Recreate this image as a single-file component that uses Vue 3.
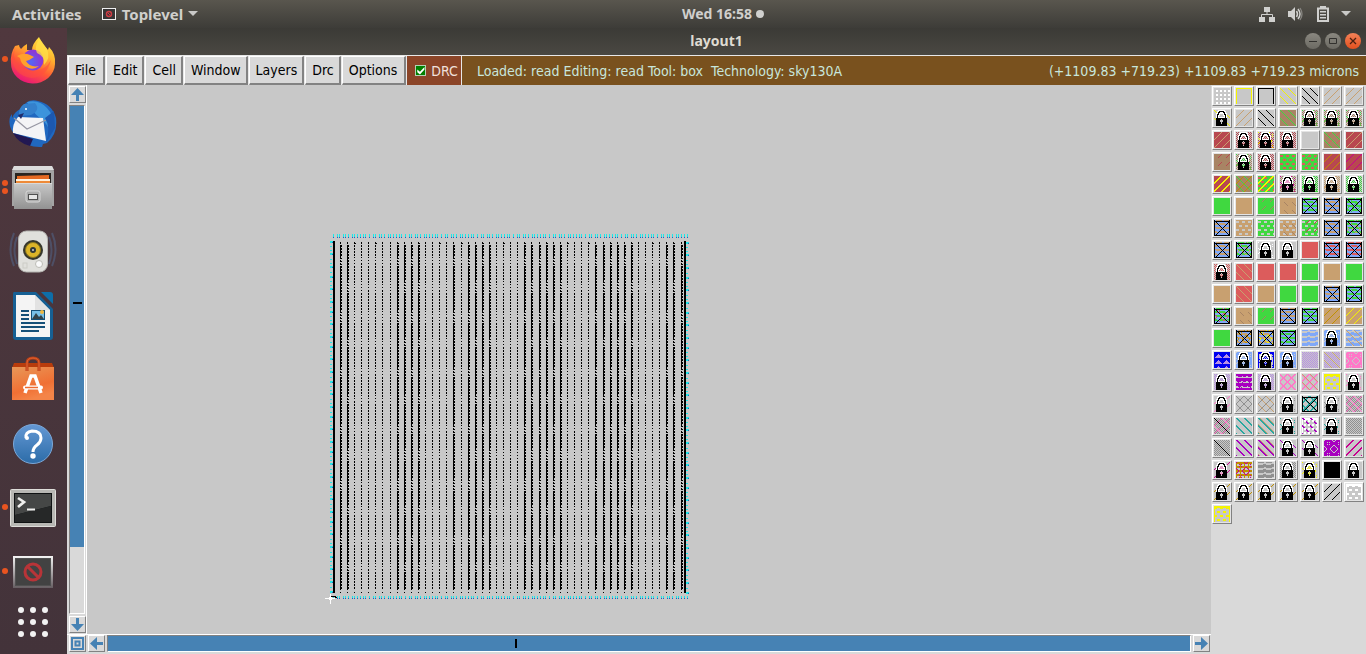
<script setup>
import { ref } from 'vue'

const menus = ['File', 'Edit', 'Cell', 'Window', 'Layers', 'Drc', 'Options']
const drc = ref(true)

const K = {
  g: '#c8c8c8', w: '#ffffff', k: '#000000', y: '#f4f400', G: '#40d840', T: '#c8a070',
  R: '#dc5c5c', D: '#b84850', B: '#a88464', b: '#80a8f8', o: '#c09000', m: '#c80090',
  v: '#a800c0', l: '#b890e4', p: '#ff78c8', c: '#28a8a0', a: '#909090', n: '#0000f0'
}

const hash = (x, y) => (x * 7 + y * 13 + x * y * 5) % 11

const shapes = {
  '\\': (x, y) => (x - y + 16) % 8 === 0,
  '/': (x, y) => (x + y) % 8 === 7,
  '2': (x, y) => (x - y + 16) % 8 < 2,
  '3': (x, y) => (x - y + 16) % 8 === 2,
  '4': (x, y) => (x + y) % 8 > 5,
  M: (x, y) => x === y,
  d: (x, y) => x % 4 > 1 && y % 4 > 1,
  S: (x, y) => y % 4 > 0 && y % 4 < 3 && (x + ((y >> 2) & 1) * 3) % 6 < 3,
  D: (x, y) => x % 4 !== 0 && y % 4 > 1,
  f: (x, y) => x === 0 || y === 0 || x === 15,
  e: (x, y) => x < 1 || y < 2 || x > 14,
  k: (x, y) => (x + y) % 2 === 0,
  K: (x, y) => (x + y) % 2 === 0 && (x < 3 || x > 12 || y < 3),
  s: (x, y) => (x + y) % 8 === 7 && y % 8 < 4,
  b: (x, y) => (x - y + 16) % 8 === 0 && y % 8 > 3,
  c: (x, y) => (x - y + 16) % 8 === 0 || (x + y) % 8 === 7,
  C: (x, y) => (x - y + 17) % 8 < 2 || (x + y) % 8 > 5,
  w: (x, y) => y % 5 === 1 || (y % 5 === 2 && x % 8 < 5) || (y % 5 === 0 && x % 8 > 5),
  h: (x, y) => (y % 4 === 3 && (x + y) % 8 < 6) || (y % 4 === 0 && (x + y) % 8 > 1),
  r: (x, y) => hash(x, y) < 2,
  t: (x, y) => Math.abs((x % 8) - 4) < (y % 6) - 1,
  u: (x, y) => y % 5 === 3 || (y % 5 === 2 && x % 5 < 2),
  X: (x, y) => x === 0 || y === 1 || x === 15 || y === 15 || x === y || x + y === 16
}

const lockRows = [
  '    wwwwwww     ',
  '   wwkkkkkww    ',
  '   wkkwwwkkw    ',
  '  wwkwwwwwkww   ',
  '  wkkw...wkkw   ',
  '  wkww...wwkw   ',
  '  wkw.....wkw   ',
  '  wkwwwwwwwkw   ',
  '  kkkkkkkkkkk   ',
  '  kkkkk.kkkkk   ',
  '  kkkk...kkkk   ',
  '  kkkk...kkkk   ',
  '  kkkkk.kkkkk   ',
  '  kkkkk.kkkkk   ',
  '  kkkkkkkkkkk   ',
  '  kkkkkkkkkkk   '
]

function paint(code) {
  const layers = code.slice(1).match(/../g) || []
  const paths = {}
  for (let y = 0; y < 16; y++) {
    let start = 0
    let last = null
    for (let x = 0; x <= 16; x++) {
      let c = null
      if (x < 16) {
        c = code[0]
        for (const [kind, colour] of layers) {
          if (kind === 'L') {
            const q = lockRows[y][x] || ' '
            if (q === 'w' || q === 'k') c = q
            else if (q === '.') c = (x + y) % 2 ? colour : 'g'
          } else if (shapes[kind](x, y)) c = colour
        }
      }
      if (c !== last) {
        if (last && last !== code[0]) {
          paths[last] = (paths[last] || '') + `M${start} ${y}h${x - start}v1h-${x - start}z`
        }
        start = x
        last = c
      }
    }
  }
  return { bg: K[code[0]], parts: Object.entries(paths).map(([c, d]) => ({ fill: K[c], d })) }
}

const xg = 'bhGXk'
const xt = 'bhTXk'
const xr = 'bhRXk'
const rows = [
  ['gdw', 'gfy', 'gfk', 'g\\y', 'g\\k', 'g/T', 'g/T'],
  ['g\\yLg', 'g/T', 'g\\k', 'B\\G', 'gKBrGLB', 'gKBrGLB', 'gKBrGLB'],
  ['D/T', 'gKDLD', 'gKDryLD', 'gKDLD', 'g', 'B\\GsR', 'D/T'],
  ['BsD', 'gKBrGLG', 'gKDLD', 'GSR', 'GSRsB', 'D/o', 'D/m'],
  ['D4y', 'B\\G/o', 'GSR4y', 'gKBrmLp', 'grGKGLG', 'grTKTLT', 'gKGLG'],
  ['G', 'T', 'GsB', 'TbB', xg, xt, 'bhGrGXk'],
  [xt, 'TSg', 'GSg', 'TSgbB', 'GSgsD', xt, 'bhGrTXk'],
  [xt, 'bhGrTXk', 'grwLg', 'gLg', 'R', xr, xr],
  ['gKRLR', 'R\\T', 'R', 'R', 'G', 'T', 'G'],
  ['T', 'R\\T', 'T', 'G', 'G', xt, xg],
  ['bhGrRXk', 'TbB', 'GsB', xt, xg, 'T/o', 'T/y'],
  ['G', 'bhTroXk', 'bhTryXk', 'bhGXk', 'bwg', 'brgLb', 'bwg\\T'],
  ['ntl', 'brgLb', 'grnenLn', 'brgLb', 'gkl', 'gkl\\T', 'prg'],
  ['gklLl', 'vugrv', 'gklLl', 'gCp', 'gCp\\T', 'gSyey', 'grpLg'],
  ['g/pLg', 'gca', 'gca\\T', 'graLg', 'gCcXk', 'graLg', 'gkacp'],
  ['gkacpMk', 'g2c', 'g2c3T', 'grcLg', 'gew2vdw', 'grcLg', 'gka'],
  ['gkaMk', 'g2v', 'g2v3T', 'g\\vLg', 'g\\vLg', 'vrgrg', 'g4m'],
  ['g/mLp', 'oDgrm', 'awg', 'gKaLg', 'gryLy', 'k', 'gLg'],
  ['g/oLg', 'g/oLg', 'g/oLg', 'g/oLg', 'g/oLg', 'g/k', 'gSwew'],
  ['gSyey']
]
const swatches = rows.flat().map((code, i) => ({ id: i, ...paint(code) }))

/* Memory array drawing, 380 x 380 local units */
const rect = (x, y, w, h) => `M${x} ${y}h${w}v${h}h-${w}z`
const heavy = new Set([1, 2, 9, 10, 11, 12, 17, 19, 20, 21, 22, 27, 28, 29, 30, 31, 32, 37, 38, 39, 40, 41, 42, 47, 48, 49])
let bars = rect(13, 13, 2, 352) + rect(364, 13, 2, 352) + rect(11, 368, 5, 1) + rect(15, 369, 2, 1)
for (let i = 1; i < 50; i++) {
  const x = Math.floor(13.2 + i * 7.1)
  const phase = i % 2 ? 27 : 53
  bars += rect(x, 14, 1, 2) + (i % 3 ? '' : rect(x + 1, 15, 1, 1)) + rect(x, 364, 1, 1)
  for (let y = 17; y < 362; y += 3) {
    const gap = (y - phase + 56) % 56 < 10
    if (heavy.has(i)) {
      bars += gap ? rect(x, y, 1, 1) + rect(x, y + 1, 2, 1) : rect(x, y, 1, 3) + rect(x + 1, y, 1, 2)
    } else {
      bars += rect(x, y, 1, gap || (y + i * 28) % 28 < 5 ? 1 : 2)
    }
  }
}
let cyan = ''
let blue = ''
for (let base = 13; base < 368; base += 36) {
  for (const o of [0, 4, 6, 10, 12, 15, 19, 21, 24, 27, 30, 32]) {
    const x = base + o
    if (x > 367) continue
    cyan += rect(x, 6, 1, 3) + rect(x, 368, 1, 2)
    blue += rect(x, 9, 1, 1) + rect(x, 370, 1, 1)
  }
}
for (let base = 13; base < 366; base += 35) {
  for (const [o, big] of [[0, 1], [5, 0], [9, 0], [12, 1], [18, 0], [22, 0], [25, 1], [31, 0]]) {
    const y = base + o
    if (y > 365) continue
    cyan += rect(10, y, big ? 3 : 2, big ? 2 : 1) + rect(366, y + 1, big ? 3 : 2, big ? 2 : 1)
    if (big) blue += rect(12, y + 1, 1, 1) + rect(368, y + 2, 1, 1)
  }
}
</script>

<template>
  <div class="desktop">
    <header class="topbar">
      <div class="top-left">
        <button class="plain">Activities</button>
        <button class="plain app">
          <svg width="14" height="12" viewBox="0 0 14 12"><rect x=".5" y=".5" width="13" height="11" fill="#373536" stroke="#eee" /><circle cx="7" cy="6" r="2.5" fill="none" stroke="#d03c44" stroke-width="1.4" /><path d="M5.5 4.5l3 3" stroke="#d03c44" /></svg>
          Toplevel
          <svg width="10" height="6" viewBox="0 0 10 6"><path d="M0 0h10L5 5z" fill="#c9c9c7" /></svg>
        </button>
      </div>
      <button class="plain clock">Wed 16:58<i class="dot"></i></button>
      <div class="tray">
        <svg width="16" height="16" viewBox="0 0 16 16" fill="#d0d0ce"><path d="M5 1h6v5H5zM0 11h6v5H0zM10 11h6v5h-6z" /><path d="M8 5v4M2.5 11V8.500h11V11" fill="none" stroke="#d0d0ce" /></svg>
        <svg width="16" height="16" viewBox="0 0 16 16"><path d="M1 5h3l4-4v14l-4-4H1z" fill="#d0d0ce" /><path d="M9.500 5q2 3 0 6M11 3q4 5 0 10" fill="none" stroke="#d0d0ce" stroke-width="1.500" /><path d="M13 2q4 6 0 12" fill="none" stroke="#85847f" stroke-width="1.300" /></svg>
        <svg class="battery" width="12" height="16" viewBox="0 0 12 16"><path d="M1 2.500h10v12.500H1z" fill="none" stroke="#d0d0ce" stroke-width="2" /><path d="M3 0h6v2H3zM3 5h6v1.500H3zM3 8h6v1.500H3zM3 11h6v1.500H3z" fill="#d0d0ce" /></svg>
        <svg width="10" height="6" viewBox="0 0 10 6"><path d="M0 0h10L5 5z" fill="#c9c9c7" /></svg>
      </div>
    </header>

    <div class="body">
      <nav class="dock" aria-label="Dock">
        <button class="launcher" aria-label="Firefox">
          <i class="pip"></i>
          <svg width="48" height="48" viewBox="0 0 48 48">
            <defs>
              <linearGradient id="ffa" x1=".8" y1="0" x2=".3" y2="1"><stop offset="0" stop-color="#fff044" /><stop offset=".35" stop-color="#ffb02e" /><stop offset=".65" stop-color="#ff5a36" /><stop offset="1" stop-color="#e8127c" /></linearGradient>
              <radialGradient id="ffb" cx=".4" cy=".6"><stop offset="0" stop-color="#5468f4" /><stop offset="1" stop-color="#8a3ad8" /></radialGradient>
            </defs>
            <path d="M6 10q-5 8-4 17a22 20 0 0 0 44 1q1-10-6-17l-1 3Q32 6 30 1q-7 7-7 13h-5V8q-4 2-6 5-2-2-2-4z" fill="url(#ffa)" />
            <path d="M6 12q-2 7 0 12 6 11 18 11t18-11q-4 17-19 18Q5 40 3 22z" fill="#ff4c40" opacity=".55" />
            <circle cx="24" cy="24" r="10.500" fill="url(#ffb)" />
            <path d="M8 20q7-4 13-1l4 2q-4 3-8 4 4 7 13 5-6 5-13 1-5-3-6-9z" fill="#ffa02c" />
            <path d="M28 17q8 3 7 12 7-7 3-16L31 3q-5 5-4 11z" fill="#ffe04a" opacity=".75" />
          </svg>
        </button>
        <button class="launcher" aria-label="Thunderbird">
          <svg width="48" height="48" viewBox="0 0 48 48">
            <path d="M12 9Q18-2 29 1q14 3 18 17 2 16-9 25l-4 1-1 3q-14 1-24-9Q-2 28 1 17l2-3v4q3-7 9-9z" fill="#2068c0" />
            <path d="M18 2q12-3 20 6 10 11 4 26-3-10-10-15-10-8-14-17z" fill="#3c94dc" />
            <path d="M9 17l25 1 3 23L4 33q-1-9 5-16z" fill="#f4f4f6" /><path d="M5 18l13 11 19-9" fill="none" stroke="#9898a4" stroke-width="1.200" />
            <path d="M4 33l20 6-3 7q-12-3-17-13z" fill="#221852" /><path d="M15 4q-6 4-5 12l12-1q10-5 4-12z" fill="#3480cc" /><path d="M9 15l6-2-3 6z" fill="#202c6c" /><circle cx="17" cy="9" r="1" fill="#fff" />
            <path d="M36 18q6 9 1 25l9-15-1-17z" fill="#1c58b0" />
          </svg>
        </button>
        <button class="launcher" aria-label="Files">
          <i class="pip"></i><i class="pip"></i>
          <svg width="48" height="48" viewBox="0 0 48 48">
            <defs><linearGradient id="fil" x2="0" y2="1"><stop offset="0" stop-color="#c8c8c8" /><stop offset="1" stop-color="#929292" /></linearGradient></defs>
            <path d="M5 2h38l2 5v35H3V7z" fill="#a4a4a4" /><path d="M5 2h38l2 4H3z" fill="#dcdcdc" /><path d="M6 9h36v12H6z" fill="#292420" /><path d="M8 12l32-1v4H8z" fill="#e66a22" /><path d="M7 15h34v5H7z" fill="#fff0dc" /><path d="M7 17h34v2H7z" fill="#ee8a38" /><path d="M5 19h38v26H5z" fill="url(#fil)" /><path d="M5 19h38v1H5z" fill="#dadada" /><rect x="17" y="27" width="14" height="11" rx="2" fill="#adadad" stroke="#d8d8d8" /><rect x="19.500" y="30.500" width="9" height="5" fill="#e6e6e6" stroke="#505050" />
          </svg>
        </button>
        <button class="launcher" aria-label="Rhythmbox">
          <svg width="48" height="48" viewBox="0 0 48 48">
            <path d="M5 5q-7 16 0 33M43 5q7 16 0 33M8 9q-5 12 0 27M40 9q5 12 0 27" fill="none" stroke="#506082" stroke-width="2" opacity=".6" />
            <rect x="9.500" y="3" width="29" height="41" rx="8" fill="#e0e0dc" stroke="#b4b4b0" /><circle cx="24" cy="22" r="10" fill="#37372c" /><circle cx="24" cy="22" r="7.500" fill="#dcb428" stroke="#8c7820" /><circle cx="24" cy="22" r="3" fill="#303838" /><circle cx="24" cy="22" r="1" fill="#ccc" /><circle cx="30" cy="36" r="3.500" fill="#fafafa" stroke="#bcbcb6" /><rect x="14" y="35" width="4" height="5" fill="none" stroke="#ccccc6" />
          </svg>
        </button>
        <button class="launcher" aria-label="LibreOffice Writer">
          <svg width="48" height="48" viewBox="0 0 48 48">
            <path d="M5 0h22l17 17v28q0 3-3 3H7q-3 0-3-3V2q0-2 1-2z" fill="#166094" /><path d="M32 0h9q3 0 3 3v9z" fill="#0e6ea8" /><path d="M7 3h19l15 15v27H7z" fill="#f4f4f4" /><path d="M26 3v15h15z" fill="#dadada" opacity=".7" />
            <path d="M12 19h8M12 23h8M12 27h8M12 31h24M12 35h24M12 39h18" stroke="#155078" stroke-width="2" /><rect x="22" y="18" width="14" height="10" fill="#155078" /><path d="M23 19h12v8H23z" fill="#78c0e8" /><path d="M23 27l4-6 3 4 2-2 3 4z" fill="#34434a" /><circle cx="33" cy="20" r="2" fill="#f0b840" />
          </svg>
        </button>
        <button class="launcher" aria-label="Ubuntu Software">
          <svg width="48" height="48" viewBox="0 0 48 48">
            <defs><linearGradient id="sof" x2=".4" y2="1"><stop offset="0" stop-color="#e89858" /><stop offset=".7" stop-color="#f07034" /><stop offset="1" stop-color="#f48448" /></linearGradient></defs>
            <path d="M5 7h38l2 5v32H3V12z" fill="#b83c0c" /><path d="M3 11h42v33H3z" fill="url(#sof)" /><path d="M18 15V7q0-5 6-5t6 5v8" fill="none" stroke="#b84018" stroke-width="3" /><path d="M18 15V7q0-5 6-5t6 5v8" fill="none" stroke="#e86430" />
            <path d="M16 37l6-17h4l6 17" fill="none" stroke="#fff" stroke-width="3.500" /><path d="M16 31.500h16" stroke="#fff" stroke-width="4" stroke-linecap="round" /><path d="M16 31.500h13" stroke="#ee6c30" stroke-width="1.500" />
          </svg>
        </button>
        <button class="launcher" aria-label="Help">
          <svg width="48" height="48" viewBox="0 0 48 48">
            <defs><linearGradient id="hel" x2="0" y2="1"><stop offset="0" stop-color="#6498d4" /><stop offset="1" stop-color="#2c6ca8" /></linearGradient></defs>
            <circle cx="24" cy="24" r="19.500" fill="url(#hel)" stroke="#7ca8d8" /><path d="M17 18q-1-6 6-7 9 0 9 7 0 4-4 7-4 3-4 7" fill="none" stroke="#fff" stroke-width="3" /><circle cx="18" cy="18" r="2" fill="#fff" /><circle cx="24" cy="36" r="2.700" fill="#fff" />
          </svg>
        </button>
        <button class="launcher" aria-label="Terminal">
          <i class="pip"></i>
          <svg width="48" height="48" viewBox="0 0 48 48">
            <rect x="1.500" y="5.500" width="45" height="37" rx="1" fill="#b8b8b4" stroke="#dededa" /><path d="M5 9h38v30H5z" fill="#0f1213" /><path d="M6 10h36v12L6 31z" fill="#454746" /><path d="M6 31l36-9v16H6z" fill="#262828" /><path d="M9 14l6 4-6 5" fill="none" stroke="#f0f0ee" stroke-width="2.700" /><path d="M18 25.500h8" stroke="#f0f0ee" stroke-width="2" />
          </svg>
        </button>
        <button class="launcher" aria-label="Toplevel">
          <i class="pip"></i>
          <svg width="48" height="48" viewBox="0 0 48 48">
            <defs><linearGradient id="win" x2="0" y2="1"><stop offset="0" stop-color="#f4f4f4" /><stop offset="1" stop-color="#665e62" /></linearGradient></defs>
            <path d="M4 8h40v32H4z" fill="url(#win)" /><path d="M6 10h36v28H6z" fill="#505050" /><path d="M7 11h34v26H7z" fill="#424242" /><circle cx="24" cy="24" r="8" fill="none" stroke="#b83438" stroke-width="3" /><path d="M18 18l12 12" stroke="#b83438" stroke-width="3" />
          </svg>
        </button>
        <button class="apps" aria-label="Show applications">
          <i v-for="n in 9" :key="n"></i>
        </button>
      </nav>

      <main class="window">
        <div class="titlebar">
          <h1>layout1</h1>
          <div class="controls">
            <button aria-label="Minimize"><svg width="16" height="16" viewBox="0 0 16 16"><path d="M4 8.500h8" stroke="#32312e" /></svg></button>
            <button aria-label="Maximize"><svg width="16" height="16" viewBox="0 0 16 16"><path d="M4.500 5.500h7v5h-7z" fill="none" stroke="#32312e" /></svg></button>
            <button class="close" aria-label="Close"><svg width="16" height="16" viewBox="0 0 16 16"><path d="M5 5l6 6M11 5l-6 6" stroke="#4c2010" stroke-width="1.300" /></svg></button>
          </div>
        </div>

        <div class="menubar">
          <button v-for="m in menus" :key="m" class="menu">{{ m }}</button>
          <label class="drc"><input v-model="drc" type="checkbox" />DRC</label>
          <div class="status">
            <span>Loaded: read Editing: read Tool: box&nbsp; Technology: sky130A</span>
            <span>(+1109.83 +719.23) +1109.83 +719.23 microns</span>
          </div>
        </div>

        <div class="work">
          <div class="vscroll">
            <button class="arrow" aria-label="Scroll up"><svg width="15" height="15" viewBox="0 0 15 15"><path d="M7.500 1L14 8H9v6H6V8H1z" fill="#4682b4" /></svg></button>
            <div class="trough"><div class="thumb"><i></i></div></div>
            <button class="arrow" aria-label="Scroll down"><svg width="15" height="15" viewBox="0 0 15 15"><path d="M7.500 14L14 7H9V1H6v6H1z" fill="#4682b4" /></svg></button>
          </div>
          <div class="canvas">
            <svg class="drawing" width="380" height="380" viewBox="0 0 380 380" shape-rendering="crispEdges">
              <path :d="cyan" fill="#20e8e8" />
              <path :d="blue" fill="#2060c0" />
              <path :d="bars" fill="#000" />
              <path d="M10 366h1v10h-1zM5 370h10v1H5zM9 369h3v3H9z" fill="#fff" />
            </svg>
          </div>
          <div class="hscroll">
            <button class="arrow" aria-label="Fit view"><svg width="15" height="15" viewBox="0 0 15 15"><path d="M2 2h11v11H2zM5.500 5.500h4v4h-4z" fill="none" stroke="#4682b4" stroke-width="2" /></svg></button>
            <button class="arrow" aria-label="Scroll left"><svg width="15" height="15" viewBox="0 0 15 15"><path d="M1 7.500L8 1v5h6v3H8v5z" fill="#4682b4" /></svg></button>
            <div class="trough"><div class="thumb"><i></i></div></div>
            <button class="arrow" aria-label="Scroll right"><svg width="15" height="15" viewBox="0 0 15 15"><path d="M14 7.500L7 1v5H1v3h6v5z" fill="#4682b4" /></svg></button>
          </div>
          <aside class="palette" aria-label="Layers">
            <button v-for="s in swatches" :key="s.id" class="swatch" :aria-label="'Layer ' + (s.id + 1)">
              <svg width="16" height="16" viewBox="0 0 16 16" shape-rendering="crispEdges">
                <rect width="16" height="16" :fill="s.bg" />
                <path v-for="p in s.parts" :key="p.fill" :d="p.d" :fill="p.fill" />
              </svg>
            </button>
          </aside>
        </div>
      </main>
    </div>
  </div>
</template>

<style>
html, body, #app { height: 100%; }
body { overflow: hidden; }
</style>

<style scoped>
.desktop {
  display: flex;
  flex-direction: column;
  min-height: 100vh;
  background: #d9d9d9;
  font-family: "DejaVu Sans Condensed", "DejaVu Sans", sans-serif;
}
button {
  margin: 0;
  padding: 0;
  border: 0;
  background: none;
  font: inherit;
  color: inherit;
}
svg { display: block; }
.topbar {
  display: grid;
  grid-template-columns: 1fr auto 1fr;
  align-items: center;
  height: 28px;
  padding-bottom: 1px;
  box-sizing: border-box;
  background: linear-gradient(#59564e, #3d3c38);
  color: #d0cfcc;
  font: bold 14px/20px "Noto Sans", "Open Sans", sans-serif;
}
.top-left { display: flex; gap: 20px; padding-left: 12px; font-size: 15px; }
.plain { display: flex; align-items: center; gap: 6px; }
.app svg:last-child { margin-left: -1px; }
.clock { gap: 4px; padding-left: 80px; }
.dot { width: 8px; height: 8px; border-radius: 50%; background: #d0d0ce; }
.tray { display: flex; align-items: center; justify-content: flex-end; gap: 12px; padding-right: 15px; }
.battery { margin-left: 2px; }
.body { display: flex; flex: 1; }
.dock {
  display: flex;
  flex-direction: column;
  width: 67px;
  background: linear-gradient(#50383e, #43333a);
}
.launcher {
  position: relative;
  display: flex;
  flex-direction: column;
  align-items: center;
  justify-content: center;
  height: 64px;
  padding: 0 2px 1px 0;
}
.pip {
  position: absolute;
  left: 2px;
  top: 28px;
  width: 6px;
  height: 6px;
  border-radius: 50%;
  background: #e95420;
}
.pip:first-child:not(:nth-last-child(2)) { top: 24px; }
.pip + .pip { top: 32px; }
.apps {
  display: grid;
  grid-template-columns: repeat(3, 6px);
  gap: 6px;
  justify-content: center;
  padding: 3px 2px 0 0;
}
.apps i { height: 6px; border-radius: 50%; background: #f2f2f2; }
.window { display: flex; flex: 1; flex-direction: column; min-width: 0; }
.titlebar {
  display: grid;
  grid-template-columns: 1fr auto 1fr;
  align-items: center;
  height: 27px;
  padding-bottom: 1px;
  box-sizing: border-box;
  background: linear-gradient(#3b3a36, #4a4842);
}
.titlebar h1 {
  grid-column: 2;
  margin: 0;
  color: #dfdbd2;
  font: bold 14px/20px "Noto Sans", "Open Sans", sans-serif;
}
.controls { display: flex; justify-content: flex-end; gap: 4px; padding-right: 5px; }
.controls button { width: 16px; height: 16px; border-radius: 50%; background: linear-gradient(#8a8880, #6c6a63); }
.controls .close { background: linear-gradient(#f48258, #e4501e); }
.menubar {
  display: flex;
  gap: 1px;
  height: 29px;
  padding-left: 1px;
  border-top: 1px solid #e8e8e8;
  background: #e8e8e8;
  font-size: 14px;
  line-height: 26px;
}
.menu {
  padding: 0 5px 0 6px;
  border: solid #fff;
  border-width: 1px 2px 2px 1px;
  border-right-color: #828282;
  border-bottom-color: #828282;
  background: #d9d9d9;
  color: #000;
}
.menu:first-child { padding-right: 7px; }
.menu:nth-child(7) { padding-right: 7px; }
.drc {
  display: flex;
  align-items: center;
  gap: 5px;
  padding: 0 3px 0 8px;
  background: #8b4528;
  color: #f0e0dc;
}
.drc input {
  appearance: none;
  width: 11px;
  height: 11px;
  margin: 0;
  border: 1px solid #b4d0b4;
  background: #008000;
}
.drc input:checked::before {
  content: "";
  display: block;
  width: 9px;
  height: 9px;
  background: #fff;
  clip-path: polygon(10% 40%, 40% 65%, 90% 10%, 90% 40%, 40% 95%, 10% 70%);
}
.status {
  display: flex;
  flex: 1;
  align-items: center;
  justify-content: space-between;
  padding: 0 7px 0 15px;
  background: #79511e;
  color: #c8e6dc;
  white-space: nowrap;
}
.work {
  display: grid;
  flex: 1;
  grid-template-columns: 20px 1fr 155px;
  grid-template-rows: 1fr 20px;
}
.vscroll, .hscroll { display: flex; gap: 2px; background: #d9d9d9; }
.vscroll {
  flex-direction: column;
  padding: 1px 0 1px 2px;
  border-right: 1px solid #fff;
}
.hscroll {
  grid-row: 2;
  grid-column: 1 / 3;
  padding: 0 1px 2px 2px;
  border-top: 1px solid #fff;
}
.arrow {
  display: flex;
  align-items: center;
  justify-content: center;
  flex: none;
  width: 17px;
  height: 17px;
  border: 1px solid #fff;
  border-right-color: #828282;
  border-bottom-color: #828282;
}
.trough {
  flex: 1;
  border: 1px solid #fff;
  border-top-color: #828282;
  border-left-color: #828282;
}
.thumb { display: flex; align-items: center; justify-content: center; background: #4682b4; }
.vscroll .trough { width: 16px; box-sizing: border-box; }
.vscroll .thumb { height: 87%; }
.vscroll .thumb i { width: 9px; height: 2px; margin-bottom: 48px; background: #000; }
.hscroll .thumb { justify-content: flex-start; height: 100%; }
.hscroll .thumb i { width: 2px; height: 9px; margin-left: 37.6%; background: #000; }
.canvas { position: relative; overflow: hidden; background: #c8c8c8; }
.drawing { position: absolute; left: 233px; top: 143px; }
.palette {
  display: grid;
  grid-row: 1 / 3;
  grid-column: 3;
  grid-template-columns: repeat(7, 20px);
  align-content: start;
  gap: 2px;
  padding: 1px 0 0 1px;
}
.swatch {
  width: 20px;
  height: 20px;
  padding: 1px;
  border: 1px solid #fff;
  border-right-color: #828282;
  border-bottom-color: #828282;
  background: #e4e4e4;
}
</style>
